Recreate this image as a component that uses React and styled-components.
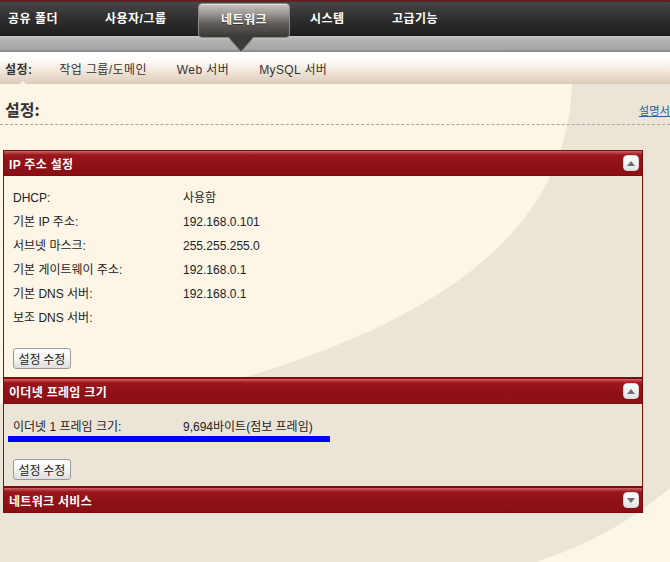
import React from "react";
import styled, { createGlobalStyle } from "styled-components";

const Global = createGlobalStyle`
  html, body { margin: 0; padding: 0; }
  body {
    background: #ebe5d8;
    font-family: "Liberation Sans", "Noto Sans CJK KR", sans-serif;
  }
`;

const Page = styled.div`
  position: relative;
  width: 670px;
  height: 562px;
  overflow: hidden;
  background: #ebe5d8;
`;

const BgArt = styled.svg`
  position: absolute;
  left: 0;
  top: 0;
  z-index: 0;
`;

const Layer = styled.div`
  position: relative;
  z-index: 1;
`;

/* ---------- top navigation ---------- */
const TopBar = styled.div`
  height: 34px;
  border-top: 2px solid #5e1f1f;
  background: linear-gradient(#474747 0%, #303030 45%, #1c1c1c 100%);
  display: flex;
  align-items: flex-start;
  padding-left: 8px;
`;

const NavItem = styled.div`
  width: ${(p) => p.$w}px;
  padding-left: ${(p) => p.$pl || 0}px;
  box-sizing: border-box;
  height: 34px;
  line-height: 34px;
  color: #fff;
  font-weight: 700;
  font-size: 12px;
  letter-spacing: 0.5px;
  white-space: nowrap;
`;

const ActiveTab = styled.div`
  position: relative;
  width: 92px;
  height: 35px;
  margin-top: 1px;
  box-sizing: border-box;
  border: 1px solid #8d8a86;
  border-radius: 4px;
  background: linear-gradient(#c9c6c2 0%, #9a9691 30%, #5f5c58 60%, #3a3835 100%);
  box-shadow: inset 0 1px 0 rgba(255, 255, 255, 0.45);
  color: #fff;
  font-weight: 700;
  font-size: 12px;
  letter-spacing: 0.5px;
  text-align: center;
  line-height: 33px;
  text-shadow: 0 1px 1px rgba(0, 0, 0, 0.5);
`;

const TabPointer = styled.svg`
  position: absolute;
  left: 29px;
  top: 33px;
`;

const GrayBand = styled.div`
  height: 14px;
  background: linear-gradient(#c4c4c4 0%, #afafaf 40%, #a5a5a5 100%);
  border-bottom: 2px solid #8f8f8f;
`;

const SubNav = styled.div`
  height: 32px;
  background: linear-gradient(#ffffff 0%, #fffefd 22%, #f1e6da 60%, #dccbb9 100%);
  display: flex;
  align-items: center;
  padding-left: 5px;
  gap: 30px;
  font-size: 12px;
  letter-spacing: 0.4px;
  color: #333;
`;

const SubLabel = styled.span`
  position: relative;
  font-weight: 700;
  margin-right: -3px;
`;

const SubPointer = styled.span`
  position: absolute;
  left: 10px;
  top: 21px;
  width: 0;
  height: 0;
  border-left: 8px solid transparent;
  border-right: 8px solid transparent;
  border-bottom: 7px solid #fdf6e6;
`;

const SubLink = styled.span`
  white-space: nowrap;
`;

/* ---------- content ---------- */
const HeadRow = styled.div`
  display: flex;
  align-items: flex-end;
  padding: 14px 0 4px 5px;
  border-bottom: 1px dashed #a9a59f;
`;

const Title = styled.h1`
  margin: 0;
  font-size: 16px;
  line-height: 22px;
  font-weight: 700;
  color: #333;
  font-family: "Noto Sans CJK KR", sans-serif;
`;

const HelpLink = styled.a`
  margin-left: auto;
  font-size: 11.3px;
  line-height: 18px;
  color: #23649a;
  text-decoration: underline;
  white-space: nowrap;
`;

const Panels = styled.div`
  margin: 25px 0 0 3px;
  width: 640px;
`;

const PanelHeader = styled.div`
  height: 26px;
  box-sizing: border-box;
  border: 1px solid #7e0a0e;
  background: linear-gradient(#cf6a6a 0px, #b33a3d 2px, #9a161c 4px, #8e1116 60%, #8a0f14 100%);
  display: flex;
  align-items: center;
  padding: 0 3px 0 5px;
  color: #fff;
  font-weight: 700;
  font-size: 12px;
  letter-spacing: 0.3px;
`;

const HeaderTitle = styled.span`
  flex: 1;
`;

const ToggleBtn = styled.span`
  width: 16px;
  height: 16px;
  box-sizing: border-box;
  border-radius: 4px;
  border: 1px solid #d8d8d8;
  background: linear-gradient(#ffffff, #e4e4e4);
  display: flex;
  align-items: center;
  justify-content: center;
`;

const PanelBody = styled.div`
  border: 1px solid #860c10;
  border-top: none;
  padding: ${(p) => p.$pt}px 9px ${(p) => p.$pb}px 9px;
  box-shadow: 1px 0 0 #f2d4c8;
`;

const Row = styled.div`
  display: flex;
  height: ${(p) => p.$h || 24}px;
  line-height: ${(p) => p.$h || 24}px;
  font-size: 12px;
  color: #222;
  white-space: nowrap;
`;

const Label = styled.span`
  width: 170px;
`;

const Value = styled.span``;

const Highlight = styled.div`
  margin: -2px 0 0 -5px;
  width: 322px;
  height: 6px;
  background: #0000ff;
`;

const Button = styled.button`
  margin-top: ${(p) => p.$mt}px;
  height: 21px;
  width: 58px;
  padding: 0;
  border: 1px solid #9a9a9a;
  border-radius: 3px;
  background: linear-gradient(#ffffff 0%, #f4f4f4 50%, #dedede 100%);
  font-family: "Noto Sans CJK KR", sans-serif;
  font-size: 12px;
  color: #222;
  display: block;
`;

function Toggle({ down }) {
  return (
    <ToggleBtn>
      <svg width="8" height="5" viewBox="0 0 8 5">
        {down ? (
          <polygon points="0,0 8,0 4,5" fill="#6e6e6e" />
        ) : (
          <polygon points="0,5 8,5 4,0" fill="#6e6e6e" />
        )}
      </svg>
    </ToggleBtn>
  );
}

const ipRows = [
  ["DHCP:", "사용함"],
  ["기본 IP 주소:", "192.168.0.101"],
  ["서브넷 마스크:", "255.255.255.0"],
  ["기본 게이트웨이 주소:", "192.168.0.1"],
  ["기본 DNS 서버:", "192.168.0.1"],
  ["보조 DNS 서버:", ""],
];

export default function App() {
  return (
    <Page>
      <Global />
      <BgArt width="670" height="562" viewBox="0 0 670 562">
        <path d="M0,84 H572 C568,190 505,295 262,372 C180,397 80,402 0,404 Z" fill="#fdf6e7" />
        <path d="M670,488 C632,520 590,545 535,562 H670 Z" fill="#fdf6e7" />
      </BgArt>
      <Layer>
        <TopBar>
          <NavItem $w={97}>공유 폴더</NavItem>
          <NavItem $w={93}>사용자/그룹</NavItem>
          <ActiveTab>
            네트워크
            <TabPointer width="26" height="16" viewBox="0 0 26 16">
              <polygon points="0,0 26,0 13,15" fill="#4a4845" stroke="#8d8a86" strokeWidth="1" />
              <polygon points="1,0 25,0 13,13" fill="#3d3b38" />
            </TabPointer>
          </ActiveTab>
          <NavItem $w={82} $pl={20}>시스템</NavItem>
          <NavItem $w={100} $pl={20}>고급기능</NavItem>
        </TopBar>
        <GrayBand />
        <SubNav>
          <SubLabel>
            설정:
            <SubPointer />
          </SubLabel>
          <SubLink>작업 그룹/도메인</SubLink>
          <SubLink>Web 서버</SubLink>
          <SubLink>MySQL 서버</SubLink>
        </SubNav>

        <HeadRow>
          <Title>설정:</Title>
          <HelpLink href="#">설명서</HelpLink>
        </HeadRow>

        <Panels>
          <PanelHeader>
            <HeaderTitle>IP 주소 설정</HeaderTitle>
            <Toggle />
          </PanelHeader>
          <PanelBody $pt={10} $pb={8}>
            {ipRows.map(([l, v]) => (
              <Row key={l}>
                <Label>{l}</Label>
                <Value>{v}</Value>
              </Row>
            ))}
            <Button $mt={18}>설정 수정</Button>
          </PanelBody>

          <PanelHeader>
            <HeaderTitle>이더넷 프레임 크기</HeaderTitle>
            <Toggle />
          </PanelHeader>
          <PanelBody $pt={13} $pb={6}>
            <Row $h={21}>
              <Label>이더넷 1 프레임 크기:</Label>
              <Value>9,694바이트(점보 프레임)</Value>
            </Row>
            <Highlight />
            <Button $mt={17}>설정 수정</Button>
          </PanelBody>

          <PanelHeader>
            <HeaderTitle>네트워크 서비스</HeaderTitle>
            <Toggle down />
          </PanelHeader>
        </Panels>
      </Layer>
    </Page>
  );
}
